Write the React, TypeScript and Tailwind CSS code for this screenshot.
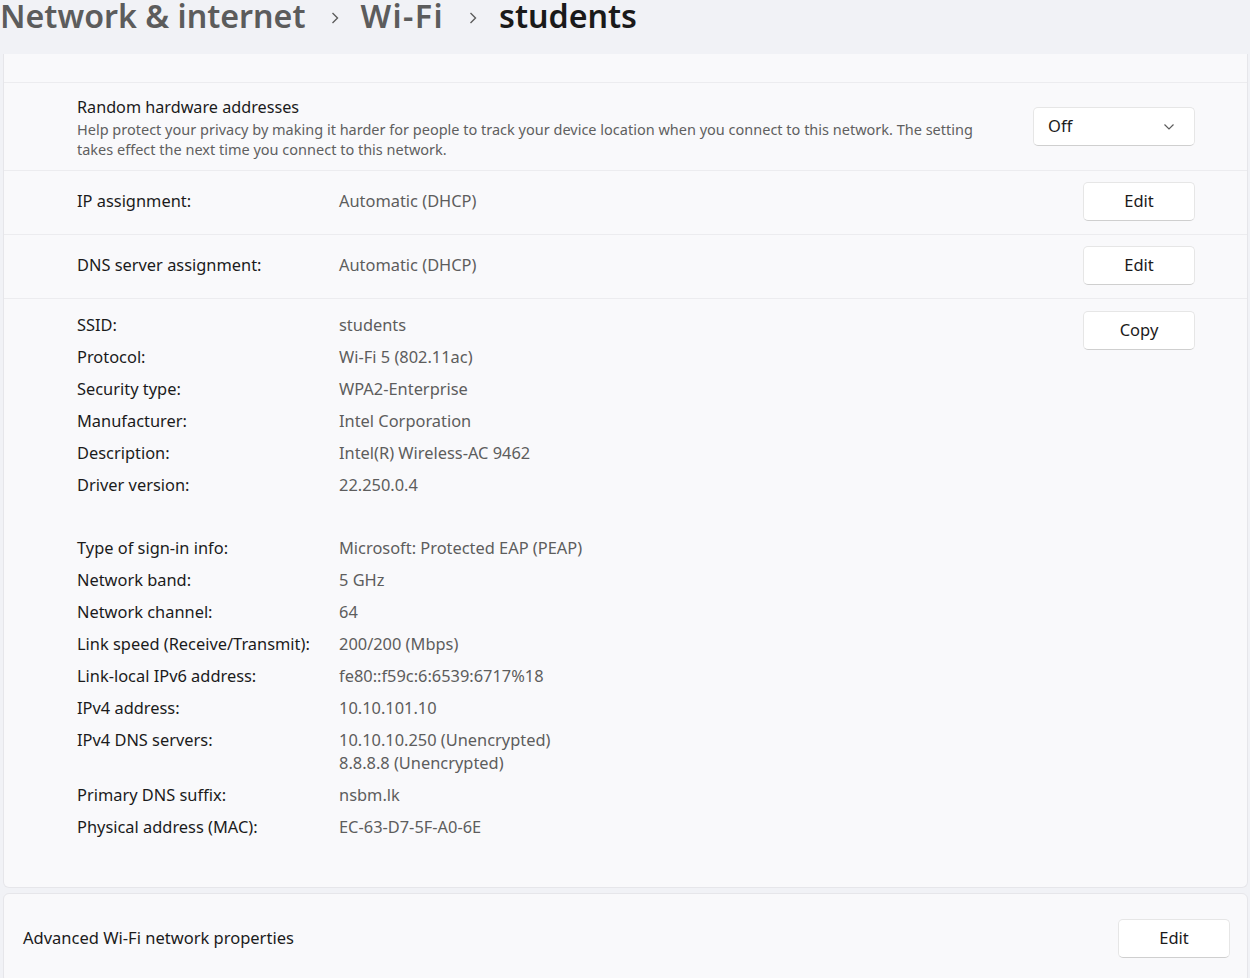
import React from 'react';

const font = "font-['Noto_Sans','Open_Sans',sans-serif]";

const details: [string, string[]][] = [
  ['SSID:', ['students']],
  ['Protocol:', ['Wi-Fi 5 (802.11ac)']],
  ['Security type:', ['WPA2-Enterprise']],
  ['Manufacturer:', ['Intel Corporation']],
  ['Description:', ['Intel(R) Wireless-AC 9462']],
  ['Driver version:', ['22.250.0.4']],
];

const details2: [string, string[]][] = [
  ['Type of sign-in info:', ['Microsoft: Protected EAP (PEAP)']],
  ['Network band:', ['5 GHz']],
  ['Network channel:', ['64']],
  ['Link speed (Receive/Transmit):', ['200/200 (Mbps)']],
  ['Link-local IPv6 address:', ['fe80::f59c:6:6539:6717%18']],
  ['IPv4 address:', ['10.10.101.10']],
  ['IPv4 DNS servers:', ['10.10.10.250 (Unencrypted)', '8.8.8.8 (Unencrypted)']],
  ['Primary DNS suffix:', ['nsbm.lk']],
  ['Physical address (MAC):', ['EC-63-D7-5F-A0-6E']],
];

function Button({ label }: { label: string }) {
  return (
    <button className="w-[112px] h-[39px] rounded-[5px] bg-white border border-[#e6e6e6] border-b-[#cfcfcf] text-[16.5px] text-[#1b1b1b] flex items-center justify-center shrink-0">
      {label}
    </button>
  );
}

function Chevron() {
  return (
    <svg width="8" height="14" viewBox="0 0 8 14" className="ml-[25px] mr-[22px] mt-[4px]">
      <polyline points="1.5,2 6.5,7 1.5,12" fill="none" stroke="#5c5c5c" strokeWidth="1.4" />
    </svg>
  );
}

function DetailRows({ rows }: { rows: [string, string[]][] }) {
  return (
    <div className="flex flex-col gap-[9px]">
      {rows.map(([label, values]) => (
        <div key={label} className="flex leading-[23px] text-[16.4px]">
          <div className="w-[262px] shrink-0 text-[#1b1b1b]">{label}</div>
          <div className="text-[#5d5d5d]">
            {values.map((v) => (
              <div key={v}>{v}</div>
            ))}
          </div>
        </div>
      ))}
    </div>
  );
}

export default function App() {
  return (
    <div className={`min-h-screen bg-[#f1f2f6] ${font}`}>
      {/* 제목 */}
      <header className="h-[54px] overflow-hidden">
        <div className="flex items-center -mt-[6px] text-[32.2px] font-semibold leading-[44px]">
          <span className="text-[#5c5c5c]">Network &amp; internet</span>
          <Chevron />
          <span className="text-[#5c5c5c] tracking-[1.4px]">Wi-Fi</span>
          <Chevron />
          <span className="text-[#1a1a1a]">students</span>
        </div>
      </header>

      <div className="pl-[3px] pr-[2px]">
        <div className="bg-[#f9f9fb] border border-t-0 border-[#e6e6ea] rounded-b-[6px]">
          <div className="h-[29px] border-b border-[#ececef]" />

          <div className="h-[88px] border-b border-[#ececef] flex items-center pl-[73px] pr-[52px] pt-[2px] gap-6">
            <div className="flex-1">
              <div className="text-[16.2px] leading-[23px] text-[#1b1b1b]">Random hardware addresses</div>
              <div className="text-[14.5px] leading-[20px] text-[#5f5f5f] max-w-[910px]">
                Help protect your privacy by making it harder for people to track your device location when you connect to this network. The setting takes effect the next time you connect to this network.
              </div>
            </div>
            <div className="w-[162px] h-[39px] -mt-[2px] rounded-[5px] bg-white border border-[#e6e6e6] border-b-[#cfcfcf] flex items-center justify-between pl-[14px] pr-[19px] text-[16.5px] text-[#1b1b1b] shrink-0">
              <span>Off</span>
              <svg width="12" height="8" viewBox="0 0 12 8">
                <polyline points="1.5,1.5 6,6 10.5,1.5" fill="none" stroke="#5c5c5c" strokeWidth="1.2" />
              </svg>
            </div>
          </div>

          <div className="h-[64px] border-b border-[#ececef] flex items-center pl-[73px] pr-[52px] pb-[3px] text-[16.4px]">
            <div className="w-[262px] text-[#1b1b1b]">IP assignment:</div>
            <div className="flex-1 text-[#5d5d5d]">Automatic (DHCP)</div>
            <Button label="Edit" />
          </div>

          <div className="h-[64px] border-b border-[#ececef] flex items-center pl-[73px] pr-[52px] pb-[3px] text-[16.4px]">
            <div className="w-[262px] text-[#1b1b1b]">DNS server assignment:</div>
            <div className="flex-1 text-[#5d5d5d]">Automatic (DHCP)</div>
            <Button label="Edit" />
          </div>

          <div className="flex pl-[73px] pr-[52px] pb-[49px]">
            <div className="flex-1 pt-[14px] flex flex-col gap-[40px]">
              <DetailRows rows={details} />
              <DetailRows rows={details2} />
            </div>
            <div className="pt-[12px]"><Button label="Copy" /></div>
          </div>
        </div>

        <div className="mt-[5px] h-[90px] bg-[#f9f9fb] border border-[#e6e6ea] rounded-[6px] flex items-center pl-[19px] pr-[17px]">
          <div className="flex-1 text-[16.5px] text-[#1b1b1b]">Advanced Wi-Fi network properties</div>
          <Button label="Edit" />
        </div>
      </div>
    </div>
  );
}
